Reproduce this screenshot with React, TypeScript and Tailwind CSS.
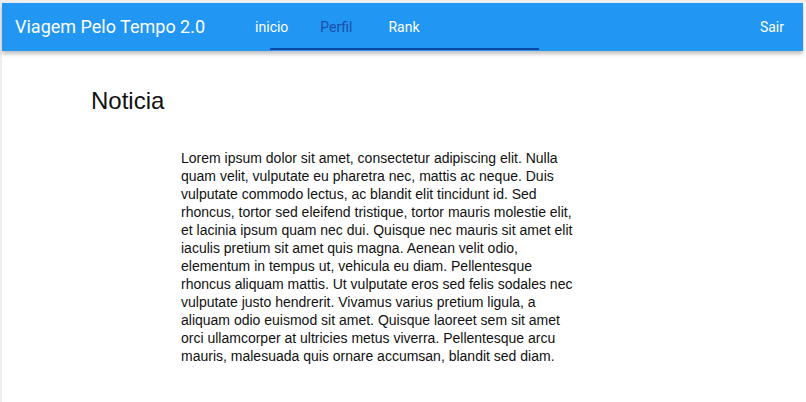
import React from 'react';

const lorem =
  'Lorem ipsum dolor sit amet, consectetur adipiscing elit. Nulla quam velit, vulputate eu pharetra nec, mattis ac neque. Duis vulputate commodo lectus, ac blandit elit tincidunt id. Sed rhoncus, tortor sed eleifend tristique, tortor mauris molestie elit, et lacinia ipsum quam nec dui. Quisque nec mauris sit amet elit iaculis pretium sit amet quis magna. Aenean velit odio, elementum in tempus ut, vehicula eu diam. Pellentesque rhoncus aliquam mattis. Ut vulputate eros sed felis sodales nec vulputate justo hendrerit. Vivamus varius pretium ligula, a aliquam odio euismod sit amet. Quisque laoreet sem sit amet orci ullamcorper at ultricies metus viverra. Pellentesque arcu mauris, malesuada quis ornare accumsan, blandit sed diam.';

const tabs = [
  { label: 'inicio', active: false, className: '' },
  { label: 'Perfil', active: true, className: 'ml-[32px]' },
  { label: 'Rank', active: false, className: 'ml-[36px]' },
];

function Toolbar() {
  return (
    <header className="relative flex h-[48px] items-center bg-[#2196f3] pl-[13px] pr-[19px] text-white shadow-[0_3px_4px_rgba(0,0,0,0.25)] font-['Roboto',sans-serif]">
      <span className="text-[18px] leading-none">Viagem Pelo Tempo 2.0</span>
      <nav className="relative ml-[50px] flex h-full items-center pt-[1px] text-[14px]">
        {tabs.map((tab) => (
          <span
            key={tab.label}
            className={`${tab.className} ${tab.active ? 'text-[#1c4fa8]' : 'text-white'}`}
          >
            {tab.label}
          </span>
        ))}
      </nav>
      <span className="ml-auto pt-[1px] text-[14px]">Sair</span>
      <div className="absolute bottom-[1px] left-[268px] h-[2px] w-[269px] bg-[#0d47a1]" />
    </header>
  );
}

export default function App() {
  return (
    <div className="min-h-[402px] border-l-2 border-t-[3px] border-[#eeeeee] bg-white pr-[3px]">
      <Toolbar />
      <main className="font-['Liberation_Sans',Arial,sans-serif] text-[#111]">
        <h1 className="ml-[89px] mt-[35px] text-[24px] leading-[30px]">Noticia</h1>
        <p className="ml-[179px] mt-[33px] w-[400px] text-[14px] leading-[18px]">
          {lorem}
        </p>
      </main>
    </div>
  );
}
